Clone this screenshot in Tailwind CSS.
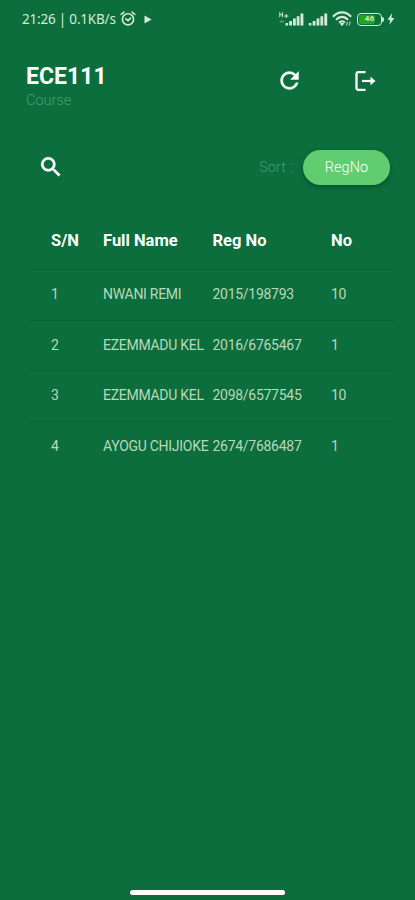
<!DOCTYPE html>
<html lang="en">
<head>
<meta charset="utf-8">
<title>ECE111</title>
<script src="https://cdn.jsdelivr.net/npm/@tailwindcss/browser@4"></script>
</head>
<body class="bg-[#0b6e3c]">
<div class="flex h-[900px] w-[415px] flex-col overflow-hidden bg-[#0b6e3c] font-['Roboto',sans-serif] text-white">
  <!-- Status bar -->
  <div class="flex h-[38px] shrink-0 items-center pl-[22px] pr-[20px] text-[#d5ebd5]">
    <span class="w-[98px] whitespace-nowrap font-['Noto_Sans',sans-serif] text-[13.5px] leading-[38px] tracking-[-0.2px]">21:26 | 0.1KB/s</span>
    <svg class="h-[16px] w-[16px]" viewBox="0 0 16 16" fill="none" stroke="currentColor" stroke-width="1.6" stroke-linecap="round"><circle cx="8" cy="8.3" r="5.6"/><path d="M1.2 3.4 4 1.2M14.8 3.4 12 1.2M5.800 7.8 8 9.600l2.600-2.400"/></svg>
    <svg class="ml-[8px] h-[9px] w-[8px]" viewBox="0 0 8 9" fill="currentColor"><path d="M.5.500 7.600 4.500.5 8.500z"/></svg>
    <div class="ml-auto flex items-center">
      <svg class="h-[16px] w-[25px]" viewBox="0 0 25 16" fill="currentColor"><path d="M6.500 12h2.600v2.500H6.500zM10.200 10h2.800v4.500h-2.800zM14 7.600h2.800v6.900H14zM17.700 5.200h2.800v9.300h-2.800zM21.500 2.400h2.900v12.100h-2.900z"/><path d="M.8 1.200v5M3.600 1.200v5M.8 3.700h2.800M5.200 5h4.200M7.300 3v4" fill="none" stroke="currentColor" stroke-width="1"/><path d="M.5 10.500 2.700 9v3zM5.400 10.500 3.400 9v3z" opacity=".45"/></svg>
      <svg class="ml-[4px] h-[16px] w-[20px]" viewBox="0 0 20 16" fill="currentColor"><path d="M.8 12h2.600v2.500H.8zM4.700 10h2.800v4.500H4.700zM8.600 7.600h2.800v6.900H8.600zM12.400 5.200h2.800v9.300h-2.800zM16.300 2.400h2.900v12.100h-2.900z"/></svg>
      <svg class="ml-[4px] h-[16px] w-[20px]" viewBox="0 0 20 16" fill="none" stroke="currentColor" stroke-width="2.100"><path d="M.9 5.800C6-.1 14-.1 19.100 5.800M4 8.800c3.500-3.900 8.500-3.900 12 0M7 11.600c1.800-1.900 4.200-1.900 6 0"/><path d="M10 15.200 7.800 12.600c1.300-1 3.100-1 4.400 0z" fill="currentColor" stroke="none"/><path d="M14.300 14.500 15.500 11M17 14.500 18.200 10.500" stroke-width="1.300" opacity=".7"/></svg>
      <div class="ml-[5px] flex h-[13px] w-[25px] items-center rounded-[4px] border-[1.5px] border-[#d5ebd5] p-[1px]">
        <div class="flex h-full w-[16px] items-center justify-end rounded-[2px] bg-[#24a51d] text-[8px] font-bold leading-none text-[#d2e8cc]"><span class="mr-[1px]">46</span></div>
      </div>
      <div class="h-[5px] w-[2px] rounded-r bg-[#d5ebd5]"></div>
      <svg class="ml-[3px] h-[12px] w-[8px]" viewBox="0 0 8 12" fill="currentColor"><path d="M5 .2.500 6.800h2.700L2.400 11.800 7.500 4.900H4.500z"/></svg>
    </div>
  </div>

  <!-- Course header -->
  <header class="flex h-[84px] shrink-0 pl-[26px] pr-[38.500px] pt-[26px]">
    <div>
      <h1 class="text-[23px] font-bold leading-[26px] tracking-[0.05px]">ECE111</h1>
      <p class="text-[14.500px] font-light leading-[21px] text-[#4b9a70]">Course</p>
    </div>
    <div class="ml-auto flex h-[33px] items-center gap-[48px]">
      <svg class="h-[27px] w-[27px]" viewBox="0 0 24 24" fill="currentColor" stroke="currentColor" stroke-width=".4"><path d="M17.650 6.350A7.960 7.960 0 0 0 12 4a8 8 0 1 0 7.730 10h-2.080A6 6 0 1 1 12 6c1.660 0 3.140.690 4.220 1.780L13 11h7V4z"/></svg>
      <svg class="h-[26px] w-[26px]" viewBox="0 0 26 26"><path d="M14.500 4.200H7.500a2 2 0 0 0-2 2v13.600a2 2 0 0 0 2 2H14.500" fill="none" stroke="currentColor" stroke-width="2.300"/><path d="M11 13H21" stroke="currentColor" stroke-width="2.200"/><path d="M19.500 8.800 24.500 13 19.500 17.200z" fill="currentColor"/></svg>
    </div>
  </header>

  <!-- Search and sort -->
  <div class="flex h-[90px] shrink-0 items-center pl-[38px] pr-[25px]">
    <svg class="h-[26px] w-[26px]" viewBox="0 0 24 24" fill="currentColor" stroke="currentColor" stroke-width=".5"><path d="M15.500 14h-.790l-.280-.270A6.500 6.500 0 1 0 13.730 14.430l.270.280v.790l5 4.990L20.490 19zM9.500 14a4.500 4.500 0 1 1 0-9 4.500 4.500 0 0 1 0 9z"/></svg>
    <span class="ml-auto pt-[1px] text-[14px] font-light tracking-[0.3px] text-[#4b9a70]">Sort :</span>
    <button class="ml-[10px] h-[35px] w-[87px] rounded-full bg-[#60ce70] pt-[1px] text-[14.500px] font-light tracking-[0.1px] shadow-[0_2px_4px_rgba(0,40,15,0.4)]">RegNo</button>
  </div>

  <!-- Students -->
  <div class="ml-[28px] mr-[20px] grid h-[57px] grid-cols-[52px_109.500px_118.500px_1fr] whitespace-nowrap pl-[23px] text-[16.500px] font-bold leading-[57px]">
    <span>S/N</span><span>Full Name</span><span>Reg No</span><span>No</span>
  </div>
  <div class="ml-[28px] mr-[20px] flex flex-col text-[14px] leading-[49.500px] tracking-[-0.280px] text-[#b9d8bb]">
    <div class="grid h-[50.700px] grid-cols-[52px_109.500px_118.500px_1fr] whitespace-nowrap border-t border-[#096838] pl-[23px]"><span>1</span><span>NWANI REMI</span><span>2015/198793</span><span>10</span></div>
    <div class="grid h-[50.700px] grid-cols-[52px_109.500px_118.500px_1fr] whitespace-nowrap border-t border-[#086536] pl-[23px]"><span>2</span><span>EZEMMADU KEL</span><span>2016/6765467</span><span>1</span></div>
    <div class="grid h-[50.700px] grid-cols-[52px_109.500px_118.500px_1fr] whitespace-nowrap border-t border-[#086536] pl-[23px]"><span>3</span><span>EZEMMADU KEL</span><span>2098/6577545</span><span>10</span></div>
    <div class="grid h-[50.700px] grid-cols-[52px_109.500px_118.500px_1fr] whitespace-nowrap border-t border-[#086536] pl-[23px]"><span>4</span><span>AYOGU CHIJIOKE</span><span>2674/7686487</span><span>1</span></div>
  </div>

  <!-- Gesture bar -->
  <div class="mb-[5px] ml-[130px] mt-auto h-[5px] w-[155px] shrink-0 rounded-full bg-white"></div>
</div>
</body>
</html>
